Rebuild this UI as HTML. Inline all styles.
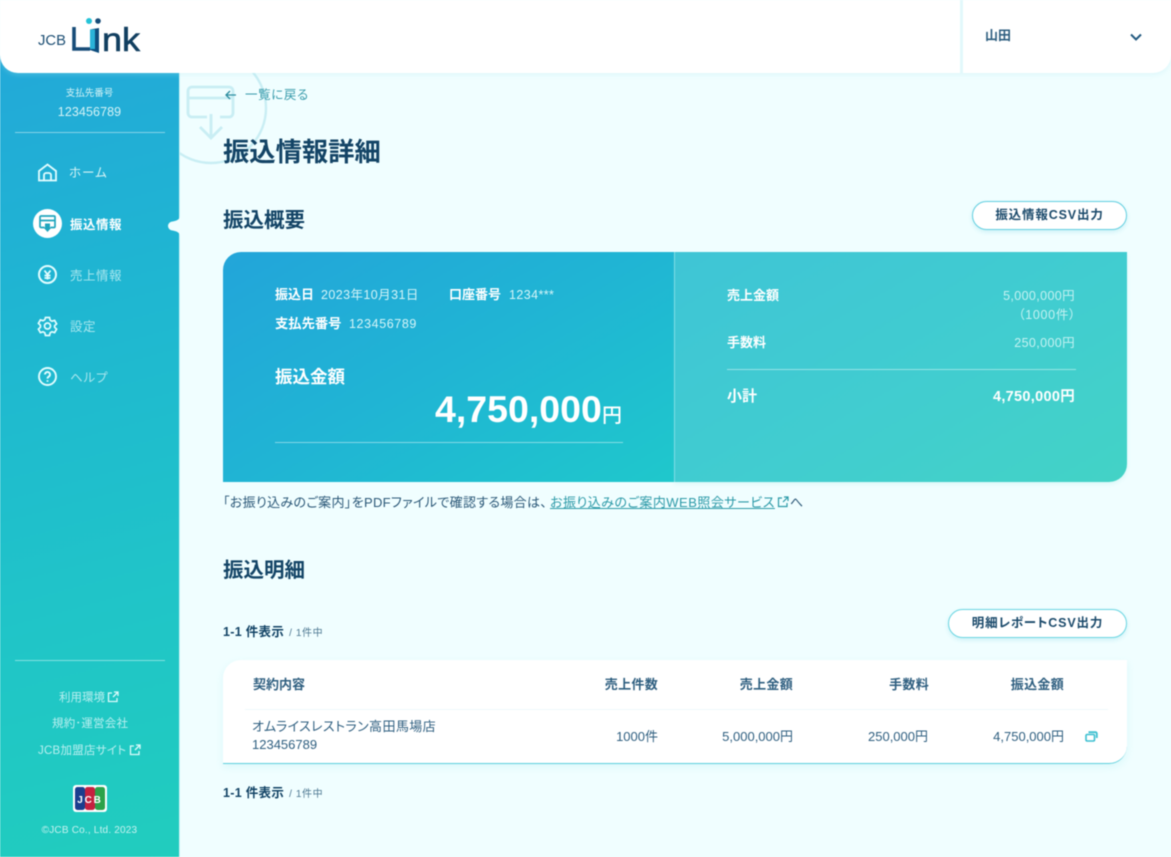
<!DOCTYPE html>
<html lang="ja"><head><meta charset="utf-8"><title>振込情報詳細</title>
<style>
html,body{margin:0;padding:0;background:#f0feff}
#p{position:relative;width:1171px;height:857px;overflow:hidden;background:#f0feff;font-family:"Liberation Sans","Noto Sans CJK JP",sans-serif;color:#1b4a6b;filter:blur(.45px);font-feature-settings:"palt"}
.t{position:absolute;white-space:nowrap;line-height:1}
.r{text-align:right}
.b{font-weight:700}
.w{color:#fff}
.l{color:#d5f3f6}
.d{color:#134466}
.m{color:#2f5f80}
.v{font-size:12.500px;color:#d6f5f8;letter-spacing:.42px}
.x{font-size:12.500px;color:#c5f2f2;letter-spacing:.38px}
svg{position:absolute;overflow:visible}
.ln{position:absolute;height:1px;background:rgba(255,255,255,.45)}
.btn{position:absolute;box-sizing:border-box;background:#fff;border-radius:15px;border:1.5px solid #63cfe0;box-shadow:0 2px 5px rgba(60,190,210,.2);font-size:12.500px;font-weight:700;color:#1b4a6b;text-align:center;letter-spacing:.85px}
</style></head><body><div id="p">

<!-- watermark, clipped to the main area -->
<div style="position:absolute;left:180px;top:73px;width:100px;height:100px;overflow:hidden">
<svg style="left:0;top:-3px" width="100" height="100" fill="none" stroke="#c9eef4" stroke-width="2.800">
<circle cx="31" cy="38" r="55" stroke-width="2.400"/>
<path d="M27 47H12a4 4 0 0 1-4-4V21a4 4 0 0 1 4-4h37a4 4 0 0 1 4 4v22a4 4 0 0 1-4 4H40M8 28H53M31 44V68M20 57l11 11 11-11"/>
</svg></div>

<!-- sidebar -->
<div style="position:absolute;left:0;top:0;width:179px;height:857px;background:linear-gradient(165deg,#24a6da 0%,#1fb6d2 35%,#20c5c8 70%,#21cdbe 100%);border-right:1px solid #c8f1f5"></div>
<svg style="left:168px;top:216px" width="12" height="20" viewBox="0 0 12 20"><path d="M12 0C12 3.500 8 5 4.500 5.500A4.500 4.500 0 0 0 4.500 14.500C8 15 12 16.500 12 20z" fill="#f0feff"/></svg>

<!-- header -->
<div style="position:absolute;left:0;top:0;width:1171px;height:73px;background:#fff;border-radius:0 0 18px 18px;box-shadow:0 2px 5px rgba(170,230,240,.25)"></div>
<div style="position:absolute;left:960px;top:0;width:3px;height:73px;background:#e2f8fb"></div>

<!-- logo -->
<svg style="left:30px;top:10px" width="120" height="50">
<text x="8" y="35" font-family="Liberation Sans" font-size="15" fill="#1d4f74" textLength="28" lengthAdjust="spacingAndGlyphs">JCB</text>
<path d="M44 17V39H60" fill="none" stroke="#174c78" stroke-width="3.600"/>
<path d="M60 19.500L69 18V43L60 40z" fill="#0e4d7d"/><path d="M60 19.500H65V39H60z" fill="#2ab2d8"/>
<circle cx="59" cy="11" r="3" fill="#25c3d8"/><circle cx="68" cy="11" r="2.800" fill="#174c78"/>
<text x="72" y="41" font-family="Liberation Sans" font-size="33" fill="#123f60" stroke="#123f60" stroke-width=".6" textLength="38" lengthAdjust="spacingAndGlyphs">nk</text>
</svg>

<div class="t b m" style="left:985px;top:29px;font-size:13px">山田</div>
<svg style="left:1129px;top:32px" width="14" height="10" fill="none" stroke="#235a80" stroke-width="2"><path d="M2 2.500l5 5 5-5"/></svg>

<!-- sidebar top -->
<div class="t l" style="left:0;width:179px;text-align:center;top:89px;font-size:9.500px">支払先番号</div>
<div class="t l" style="left:0;width:179px;text-align:center;top:106px;font-size:12.500px;letter-spacing:.1px">123456789</div>
<div class="ln" style="left:15px;top:132px;width:150px"></div>

<!-- nav -->
<svg style="left:38px;top:163px" width="20" height="20" fill="none" stroke="#e2fdff" stroke-width="1.800"><path d="M1 8L9.500 1.500 18 8V17.500H1zM6 17.500V12a2 2 0 0 1 2-2h3a2 2 0 0 1 2 2v5.500"/></svg>
<div class="t l" style="left:69px;top:167px;font-size:12.500px;letter-spacing:1px">ホーム</div>

<div style="position:absolute;left:33px;top:209px;width:29px;height:29px;border-radius:50%;background:#fff"></div>
<svg style="left:38px;top:214px" width="20" height="20" fill="none" stroke="#1fa5bd" stroke-width="1.700"><path d="M6.500 13.500H3a1 1 0 0 1-1-1V3a1 1 0 0 1 1-1h13a1 1 0 0 1 1 1v9.500a1 1 0 0 1-1 1h-3.500M2 6.500H17"/><path d="M7 9.500v4H5.500L9.500 18l4-4.500H12v-4z" fill="#1fa5bd" stroke="none"/></svg>
<div class="t b w" style="left:70px;top:219px;font-size:12.500px;letter-spacing:.5px">振込情報</div>

<svg style="left:38px;top:265px" width="20" height="20" fill="none" stroke="#e2fdff"><circle cx="9.500" cy="9.500" r="8.500" stroke-width="2"/><path d="M6.500 5.500l3 4 3-4M6.500 10.500h6M6.500 13h6M9.500 9.500v5" stroke-width="1.800"/></svg>
<div class="t" style="left:70px;top:270px;font-size:12.500px;letter-spacing:.5px;color:#a8e6ee">売上情報</div>

<svg style="left:38px;top:316px" width="20" height="20" viewBox="0 0 20 20" fill="none" stroke="#e2fdff" stroke-width="1.700"><circle cx="9.500" cy="10" r="3"/><path d="M7.500 1.500h4l.7 2.700 1.700 1 2.700-.8 2 3.500-2 1.900v1.400l2 1.900-2 3.500-2.700-.8-1.700 1-.7 2.700h-4l-.7-2.700-1.700-1-2.700.8-2-3.500 2-1.900V9.300l-2-1.900 2-3.500 2.700.8 1.700-1z"/></svg>
<div class="t" style="left:70px;top:321px;font-size:12.500px;letter-spacing:.5px;color:#a8e6ee">設定</div>

<svg style="left:38px;top:367px" width="20" height="20" fill="none" stroke="#e2fdff" stroke-width="1.900"><circle cx="9.500" cy="9.500" r="8.500"/><path d="M7 7.500a2.500 2.500 0 1 1 3.800 2.100c-.9.600-1.300 1-1.300 2M9.500 13.200v1.500"/></svg>
<div class="t" style="left:70px;top:372px;font-size:12.500px;letter-spacing:.8px;color:#a8e6ee">ヘルプ</div>

<!-- sidebar bottom -->
<div class="ln" style="left:15px;top:660px;width:150px"></div>
<div class="t" style="left:59px;top:693px;font-size:11.500px;color:#b9eff0">利用環境</div>
<svg style="left:107px;top:691px" width="12" height="12" fill="none" stroke="#dcfbfb" stroke-width="1.300"><path d="M5 2H1.500v8.500H10V7M6 6l4.500-4.500M7 1h4v4"/></svg>
<div class="t" style="left:52px;top:719px;font-size:11.500px;color:#b9eff0;letter-spacing:.2px">規約･運営会社</div>
<div class="t" style="left:38px;top:746px;font-size:11.500px;color:#b9eff0;letter-spacing:.25px">JCB加盟店サイト</div>
<svg style="left:129px;top:744px" width="12" height="12" fill="none" stroke="#dcfbfb" stroke-width="1.300"><path d="M5 2H1.500v8.500H10V7M6 6l4.500-4.500M7 1h4v4"/></svg>

<svg style="left:73px;top:785px" width="34" height="27">
<rect width="34" height="27" rx="3" fill="#fff"/>
<rect x="2" y="2" width="10" height="23" rx="2.500" fill="#1a3e8e"/>
<rect x="12" y="2" width="10" height="23" rx="2.500" fill="#c5203f"/>
<rect x="22" y="2" width="10" height="23" rx="2.500" fill="#2ca24a"/>
<text x="17" y="18" text-anchor="middle" font-family="Liberation Sans" font-size="10" font-weight="700" fill="#fff" letter-spacing="1.800">JCB</text>
</svg>
<div class="t" style="left:0;width:179px;text-align:center;top:826px;font-size:10px;letter-spacing:.2px;color:#c7f2f0">©JCB Co., Ltd. 2023</div>

<!-- main heading -->
<svg style="left:225px;top:90px" width="12" height="10" fill="none" stroke="#2b8d9f" stroke-width="1.300"><path d="M11 5H1M5 1L1 5l4 4"/></svg>
<div class="t" style="left:245px;top:89px;font-size:12.500px;letter-spacing:.6px;color:#3a9cac">一覧に戻る</div>
<div class="t b d" style="left:223px;top:139px;font-size:26.300px">振込情報詳細</div>
<div class="t b d" style="left:223px;top:211px;font-size:20.500px">振込概要</div>

<div class="btn" style="left:972px;top:201px;width:155px;height:29px;line-height:27px">振込情報CSV出力</div>

<!-- card -->
<div style="position:absolute;left:223px;top:252px;width:451px;height:230px;border-radius:18px 0 0 0;background:linear-gradient(150deg,#23a5da 0%,#20b5d4 50%,#1fc8cc 100%)"></div>
<div style="position:absolute;left:674px;top:252px;width:453px;height:230px;border-radius:0 0 18px 0;background:linear-gradient(150deg,#3fc5d6 0%,#41cdd0 55%,#43d3c6 100%);border-left:1px solid #7fdde5;box-sizing:border-box;box-shadow:0 2px 4px rgba(100,210,210,.15)"></div>

<div class="t b w" style="left:275px;top:288px;font-size:13px">振込日</div>
<div class="t v" style="left:321px;top:289px">2023年10月31日</div>
<div class="t b w" style="left:449px;top:288px;font-size:13px">口座番号</div>
<div class="t v" style="left:509px;top:289px">1234***</div>
<div class="t b w" style="left:275px;top:317px;font-size:13.300px">支払先番号</div>
<div class="t v" style="left:349px;top:318px;letter-spacing:.6px">123456789</div>

<div class="t b w" style="left:275px;top:369px;font-size:17.500px">振込金額</div>
<div class="t b w" style="left:435px;top:391px;font-size:37.500px">4,750,000</div>
<div class="t b w" style="left:602px;top:406px;font-size:20px;font-weight:500">円</div>
<div class="ln" style="left:275px;top:442px;width:348px"></div>

<div class="t b w" style="left:727px;top:289px;font-size:13px">売上金額</div>
<div class="t r x" style="right:96px;top:290px">5,000,000円</div>
<div class="t r x" style="right:95px;top:309px;letter-spacing:.7px">（1000件）</div>
<div class="t b w" style="left:727px;top:336px;font-size:13px">手数料</div>
<div class="t r x" style="right:96px;top:337px">250,000円</div>
<div class="ln" style="left:727px;top:369px;width:349px"></div>
<div class="t b w" style="left:727px;top:389px;font-size:15px">小計</div>
<div class="t b w r" style="right:96px;top:390px;font-size:14.500px;letter-spacing:.3px">4,750,000円</div>

<!-- note -->
<div class="t" style="left:223px;top:496px;font-size:13px;color:#2b5878;letter-spacing:.33px">「お振り込みのご案内」をPDFファイルで確認する場合は、</div>
<div class="t" style="left:550px;top:496px;font-size:13px;color:#2c9aa8;text-decoration:underline;letter-spacing:.48px">お振り込みのご案内WEB照会サービス</div>
<svg style="left:777px;top:496px" width="12" height="12" fill="none" stroke="#2c9aa8" stroke-width="1.200"><path d="M5 2H1.500v8.500H10V7M6 6l4.500-4.500M7 1h4v4"/></svg>
<div class="t" style="left:790px;top:496px;font-size:13px;color:#2b5878">へ</div>

<div class="t b d" style="left:223px;top:561px;font-size:20.500px">振込明細</div>

<div class="t b d" style="left:223px;top:626px;font-size:12.500px;letter-spacing:.3px">1-1 件表示<span style="font-weight:400;font-size:10px;color:#4d7892;letter-spacing:.6px;margin-left:5px">/ 1件中</span></div>
<div class="btn" style="left:948px;top:609px;width:179px;height:29px;line-height:27px;border-color:#6bd6e2">明細レポートCSV出力</div>

<!-- table -->
<div style="position:absolute;left:223px;top:660px;width:904px;height:104px;box-sizing:border-box;background:#fff;border-radius:18px 0 18px 0;border-bottom:1.500px solid #5dcfdc;box-shadow:0 3px 8px rgba(120,220,230,.18)"></div>
<div style="position:absolute;left:245px;top:709px;width:863px;height:1px;background:#eef9fc"></div>
<div class="t b m" style="left:253px;top:678px;font-size:13px">契約内容</div>
<div class="t b m r" style="right:513px;top:678px;font-size:13px;letter-spacing:.3px">売上件数</div>
<div class="t b m r" style="right:378px;top:678px;font-size:13px;letter-spacing:.3px">売上金額</div>
<div class="t b m r" style="right:242px;top:678px;font-size:13px;letter-spacing:.3px">手数料</div>
<div class="t b m r" style="right:107px;top:678px;font-size:13px;letter-spacing:.3px">振込金額</div>
<div class="t m" style="left:252px;top:720px;font-size:13px;letter-spacing:.4px">オムライスレストラン高田馬場店</div>
<div class="t m" style="left:252px;top:738px;font-size:13px">123456789</div>
<div class="t m r" style="right:513px;top:730px;font-size:13px">1000件</div>
<div class="t m r" style="right:378px;top:730px;font-size:13px">5,000,000円</div>
<div class="t m r" style="right:243px;top:730px;font-size:13px">250,000円</div>
<div class="t m r" style="right:107px;top:730px;font-size:13px">4,750,000円</div>
<svg style="left:1085px;top:731px" width="13" height="11" fill="none" stroke="#3cbfd0" stroke-width="1.600"><rect x="1" y="3.500" width="8.500" height="6.500" rx="1.200"/><path d="M3.500 1.200h7a1.300 1.300 0 0 1 1.300 1.300v4.500" stroke-width="1.800"/></svg>

<div class="t b d" style="left:223px;top:787px;font-size:12.500px;letter-spacing:.3px">1-1 件表示<span style="font-weight:400;font-size:10px;color:#4d7892;letter-spacing:.6px;margin-left:5px">/ 1件中</span></div>

</div></body></html>
